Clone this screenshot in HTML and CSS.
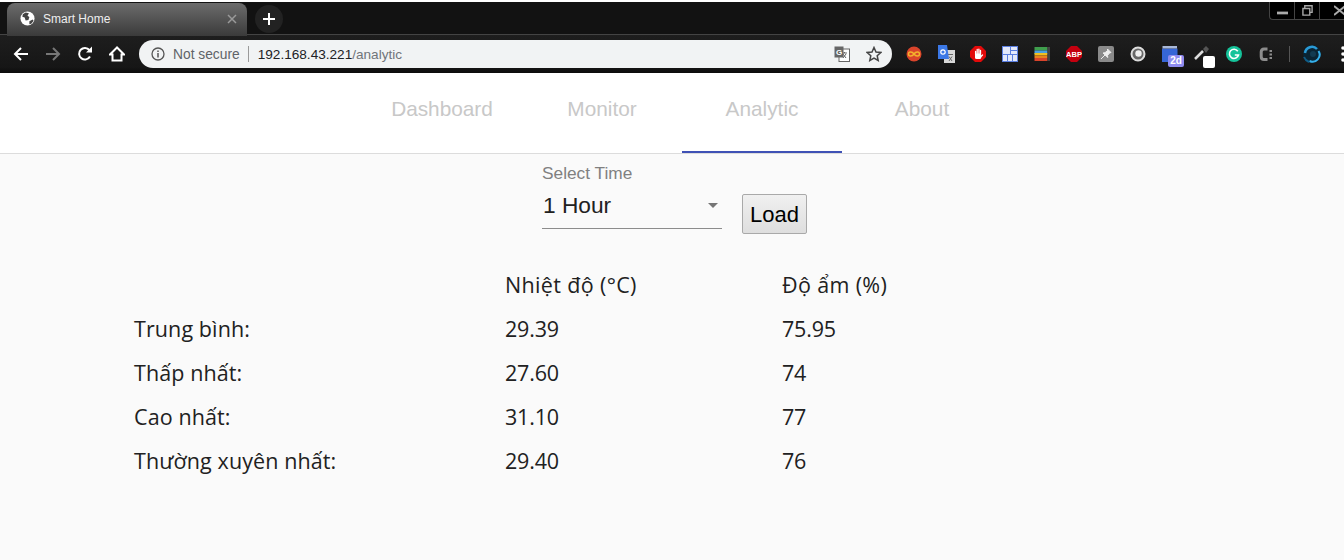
FILE: index.html
```html
<!DOCTYPE html>
<html lang="vi">
<head>
<meta charset="utf-8">
<title>Smart Home</title>
<link rel="stylesheet" href="styles.css">
</head>
<body>
<div class="chrome">
  <div class="topline"></div>
  <div class="tabstrip">
    <div class="tab">
      <svg class="favicon" viewBox="0 0 16 16"><circle cx="8" cy="8" r="7.500" fill="#fff"/><path d="M3 3.500l3-2 3.500 1-1.500 2.500 2 1.500-1 3-3 .5-1-3-2.500-1zM10 11l3.500-2 1 1.500-2.500 3-2 .5z" fill="#444"/></svg>
      <span class="tabtitle">Smart Home</span>
      <svg class="tabclose" viewBox="0 0 10 10"><path d="M1 1l8 8M9 1l-8 8" stroke="#9a9a9a" stroke-width="1.500"/></svg>
    </div>
    <div class="newtab"><svg viewBox="0 0 12 12"><path d="M6 0v12M0 6h12" stroke="#fff" stroke-width="2"/></svg></div>
    <div class="winctl">
      <span class="winbtn"><svg viewBox="0 0 10 10" class="wi"><rect x="0" y="6" width="10" height="2.500" fill="#aaa"/></svg></span>
      <span class="winbtn"><svg viewBox="0 0 12 12" class="wi"><path d="M3 3V0.800h8V8H9M1 3.800h7.500V11H1z" fill="none" stroke="#aaa" stroke-width="1.500"/></svg></span>
      <span class="winbtn last"><svg viewBox="0 0 10 10" class="wi"><path d="M0 1l10 8M10 1L0 9" stroke="#aaa" stroke-width="1.800"/></svg></span>
    </div>
  </div>
  <div class="toolbar">
    <svg class="nav" viewBox="0 0 16 16"><path d="M15 8H2M8 2L2 8l6 6" fill="none" stroke="#fff" stroke-width="2"/></svg>
    <svg class="nav" viewBox="0 0 16 16"><path d="M1 8h13M8 2l6 6-6 6" fill="none" stroke="#777" stroke-width="2"/></svg>
    <svg class="nav" viewBox="0 0 16 16"><path d="M13 10.500A5.800 5.800 0 1 1 12.400 4" fill="none" stroke="#fff" stroke-width="2"/><path d="M9 6.500h6v-6z" fill="#fff"/></svg>
    <svg class="nav" viewBox="0 0 16 16"><path d="M8 1.500L1 8.500h2.500v6h9v-6H15z" fill="none" stroke="#fff" stroke-width="2"/></svg>
    <div class="omnibox">
      <svg class="info" viewBox="0 0 14 14"><circle cx="7" cy="7" r="6" fill="none" stroke="#555" stroke-width="1.300"/><path d="M7 6v4.400M7 3.400v1.600" stroke="#555" stroke-width="1.500"/></svg>
      <span class="notsecure">Not secure</span>
      <span class="omnisep"></span>
      <span class="url">192.168.43.221<span class="urlpath">/analytic</span></span>
      <svg class="translate" viewBox="0 0 16 16"><rect x="5" y="3" width="10.500" height="12.500" fill="#fff" stroke="#666"/><path d="M8 7h5M10.500 6v1M9 12l3-4M9 8l3 4" stroke="#666"/><rect x="0.500" y="0.500" width="9" height="11" fill="#666"/><text x="5" y="9" class="gtext">G</text></svg>
      <svg class="star" viewBox="0 0 16 16"><path d="M8 1.500l2 4.500 4.800.500-3.600 3.200 1 4.800L8 12.100 3.800 14.500l1-4.800L1.200 6.500 6 6z" fill="none" stroke="#444" stroke-width="1.500"/></svg>
    </div>
    <div class="exts">
      <svg class="ext" viewBox="0 0 16 16"><circle cx="8" cy="8" r="7.500" fill="#d9442b"/><path d="M8 8C6 5 2.500 5.500 2.500 8s3.500 3 5.500 0 5.500-2.500 5.500 0S10 11 8 8z" fill="none" stroke="#f3b32c" stroke-width="1.500"/></svg>
      <svg class="ext overflow" viewBox="0 0 16 16"><rect x="6" y="4" width="11" height="13" fill="#d8d8d8"/><path d="M10 8.500h5M11 15l3-4.500M11 10.500l3 4.500" stroke="#666"/><path d="M0 -1h9l2 14H0z" fill="#3b78e7"/><circle cx="5" cy="6" r="2.200" fill="none" stroke="#fff" stroke-width="1.200"/></svg>
      <svg class="ext" viewBox="0 0 16 16"><path d="M5 0h6l5 5v6l-5 5H5l-5-5V5z" fill="#e30a0a"/><path d="M5.600 9V5.500M7.200 8V3.500M8.900 8V3.200M10.500 8V4.500M10.500 11l2-2" fill="none" stroke="#fff" stroke-width="1.300" stroke-linecap="round"/><rect x="5" y="7.500" width="6.200" height="5.500" rx="1.500" fill="#fff"/></svg>
      <svg class="ext" viewBox="0 0 16 16"><rect width="16" height="16" fill="#5b7fe0"/><rect x="1" y="1" width="7" height="7" fill="#e3e9fb"/><rect x="9" y="1" width="6" height="3" fill="#e3e9fb"/><rect x="9" y="5" width="6" height="3" fill="#e3e9fb"/><rect x="1" y="9" width="4" height="6" fill="#e3e9fb"/><rect x="6" y="9" width="4" height="6" fill="#e3e9fb"/><rect x="11" y="9" width="4" height="6" fill="#e3e9fb"/></svg>
      <svg class="ext" viewBox="0 0 16 16"><rect x="0.500" y="1" width="13" height="3.500" fill="#3f9e4d"/><rect x="0.500" y="4.500" width="13" height="3.500" fill="#4a9fe0"/><rect x="0.500" y="7" width="13" height="2.500" fill="#f0c020"/><rect x="0.500" y="9.500" width="13" height="2.500" fill="#e8831e"/><rect x="0.500" y="12" width="13" height="3" fill="#d9442b"/><rect x="13.500" y="1" width="2.500" height="14" fill="#444"/></svg>
      <svg class="ext" viewBox="0 0 16 16"><path d="M5 0h6l5 5v6l-5 5H5l-5-5V5z" fill="#c4000f"/><text x="8" y="10.800" class="abp">ABP</text></svg>
      <svg class="ext" viewBox="0 0 16 16"><rect width="16" height="16" rx="2" fill="#8a8a8a"/><path d="M9.500 3l3.500 3.500-1.500.5-2 2.500.3 2L5 7l2-.3 2.500-2zM7 9L3 13" fill="#eee" stroke="#eee"/></svg>
      <svg class="ext" viewBox="0 0 16 16"><circle cx="8" cy="8" r="6.500" fill="#666" stroke="#ddd" stroke-width="2"/><circle cx="8.500" cy="7.500" r="3.200" fill="#eee"/></svg>
      <div class="ext-badge-wrap">
        <svg class="ext" viewBox="0 0 16 16"><path d="M0 2.500h15.500V16H0z" fill="#3666d6"/><rect x="0.500" width="14.500" height="2.500" fill="#a9b8d8"/></svg>
        <span class="badge2d">2d</span>
      </div>
      <div class="ext-badge-wrap">
        <svg class="ext" viewBox="0 0 16 16"><path d="M1 13l8-8" stroke="#ddd" stroke-width="2.500"/><path d="M9 3l3-3 3 3-3 4z" fill="#555"/></svg>
        <span class="badgewhite"></span>
      </div>
      <svg class="ext" viewBox="0 0 16 16"><circle cx="8" cy="8" r="8" fill="#15c39a"/><path d="M11.800 5.200A4.600 4.600 0 1 0 12.500 9H8.800" fill="none" stroke="#fff" stroke-width="1.600"/></svg>
      <svg class="ext" viewBox="0 0 16 16"><path d="M9.500 3H6Q3.200 3 3.200 6v4.500Q3.200 13.500 6 13.500h3.500" fill="none" stroke="#8c8c8c" stroke-width="3"/><path d="M11.500 4h2.500v2h-2.500zM11.500 7.500h2.500v2h-2.500zM11.500 11h2.500v2h-2.500z" fill="#8c8c8c"/></svg>
      <span class="extsep"></span>
      <svg class="ext orb" viewBox="0 0 20 20"><circle cx="10" cy="10" r="9" fill="#0a2433"/><path d="M3 9a7 7 0 0 1 12-4" fill="none" stroke="#2a9ad6" stroke-width="2.500"/><path d="M16.500 7a7 7 0 0 1-9 10" fill="none" stroke="#36b0ea" stroke-width="2"/><path d="M2 13a9 9 0 0 0 5 5" fill="none" stroke="#0f5c86" stroke-width="2"/><circle cx="11" cy="10" r="3" fill="#123a50"/></svg>
      <svg class="menu" viewBox="0 0 4 16"><circle cx="2" cy="2" r="1.800" fill="#fff"/><circle cx="2" cy="8" r="1.800" fill="#fff"/><circle cx="2" cy="14" r="1.800" fill="#fff"/></svg>
    </div>
  </div>
</div>
<nav class="tabs">
  <a class="navtab">Dashboard</a>
  <a class="navtab">Monitor</a>
  <a class="navtab active">Analytic</a>
  <a class="navtab">About</a>
</nav>
<main class="content">
  <div class="controls">
    <div class="field">
      <label class="fieldlabel">Select Time</label>
      <div class="fieldselect"><span>1 Hour</span><span class="arrow"></span></div>
    </div>
    <button class="load">Load</button>
  </div>
  <div class="stats">
    <div class="cell"></div><div class="cell head">Nhiệt độ (°C)</div><div class="cell head">Độ ẩm (%)</div>
    <div class="cell">Trung bình:</div><div class="cell num">29.39</div><div class="cell num">75.95</div>
    <div class="cell">Thấp nhất:</div><div class="cell num">27.60</div><div class="cell num">74</div>
    <div class="cell">Cao nhất:</div><div class="cell num">31.10</div><div class="cell num">77</div>
    <div class="cell">Thường xuyên nhất:</div><div class="cell num">29.40</div><div class="cell num">76</div>
  </div>
</main>
</body>
</html>
```
FILE: styles.css
```css
* { box-sizing: border-box; }
html, body { margin: 0; padding: 0; height: 100%; overflow: hidden; }
body { background: #fafafa; font-family: "Liberation Sans", Arial, sans-serif; display: flex; flex-direction: column; }

.chrome { background: #111; height: 73px; flex: none; }
.topline { height: 2px; background: #fff; }
.tabstrip { height: 33px; display: flex; align-items: flex-start; position: relative; background: #121212; border-bottom: 1px solid #444; }
.tab { margin: 1px 0 0 7px; width: 240px; height: 33px; border-radius: 8px 8px 0 0; background: linear-gradient(#6c6c6c, #3a3a3a); display: flex; align-items: center; padding: 0 10px 2px 13px; position: relative; z-index: 1; }
.favicon { width: 15px; height: 15px; flex: none; }
.tabtitle { color: #eee; font-size: 12px; margin-left: 8px; flex: 1; }
.tabclose { width: 10px; height: 10px; }
.newtab { width: 28px; height: 28px; border-radius: 50%; background: #222; margin: 3px 0 0 8px; display: flex; align-items: center; justify-content: center; }
.newtab svg { width: 12px; height: 12px; }
.winctl { position: absolute; right: 0; top: 0; height: 18px; width: 75px; display: flex; background: #000; border-left: 1px solid #444; border-bottom: 1px solid #444; border-radius: 0 0 0 4px; }
.winbtn { width: 25px; border-right: 1px solid #444; display: flex; align-items: center; justify-content: center; }
.winbtn.last { border-right: 0; justify-content: flex-end; margin-right: -2px; }
.wi { width: 11px; height: 11px; }

.toolbar { height: 38px; background: linear-gradient(#1e1e1e, #161616 85%, #0b0b0b); display: flex; align-items: flex-start; padding: 5px 0 0 13px; }
.nav { width: 16px; height: 16px; margin: 6px 16px 0 0; flex: none; }
.omnibox { margin-left: -2px; width: 753px; height: 28px; border-radius: 14px; background: #f1f3f4; display: flex; align-items: center; padding: 0 10px 0 12px; flex: none; }
.info { width: 14px; height: 14px; }
.notsecure { color: #5f6368; font-size: 13.800px; margin-left: 8px; }
.omnisep { width: 1px; height: 16px; background: #9a9a9a; margin: 0 9px 0 8px; }
.url { color: #202124; font-size: 13.600px; flex: 1; }
.urlpath { color: #70757a; }
.translate { width: 16px; height: 16px; margin-right: 16px; }
.gtext { font-size: 8px; fill: #fff; text-anchor: middle; font-weight: bold; font-family: "Liberation Sans", sans-serif; }
.star { width: 16px; height: 16px; }

.exts { display: flex; align-items: center; height: 28px; margin-left: 14px; flex: none; position: relative; gap: 16px; }
.ext { width: 16px; height: 16px; display: block; flex: none; }
.overflow { overflow: visible; }
.abp { font-size: 7.500px; fill: #fff; text-anchor: middle; font-weight: bold; font-family: "Liberation Sans", sans-serif; }
.ext-badge-wrap { position: relative; width: 16px; height: 16px; }
.badge2d { position: absolute; left: 6px; top: 9px; width: 16px; height: 12px; background: #8e8cf0; color: #fff; font-size: 10px; font-weight: bold; line-height: 12px; text-align: center; border-radius: 2px; }
.badgewhite { position: absolute; left: 9px; top: 10px; width: 12px; height: 12px; background: #fff; border-radius: 2px; }
.extsep { width: 1px; height: 16px; background: #555; margin-left: -1px; }
.orb { width: 20px; height: 20px; margin-left: -4px; }
.menu { width: 4px; height: 16px; margin-left: 3px; flex: none; }

.tabs { flex: none; height: 81px; background: #fff; border-bottom: 1px solid #dcdcdc; display: flex; justify-content: center; padding-left: 20px; }
.navtab { width: 160px; height: 80px; color: #c8c8c8; font-size: 20.800px; display: flex; align-items: center; justify-content: center; padding-bottom: 7px; border-bottom: 2px solid transparent; }
.navtab.active { border-bottom-color: #3f51b5; }

.content { flex: 1; background: #fafafa; }
.controls { display: flex; align-items: flex-start; padding: 10px 0 0 542px; }
.field { width: 180px; }
.fieldlabel { display: block; color: #808080; font-size: 17.300px; line-height: 18px; }
.fieldselect { height: 46px; border-bottom: 1px solid #8c8c8c; display: flex; align-items: center; justify-content: space-between; font-size: 22.700px; color: #212121; padding: 0 4px 0 1px; margin-top: 1px; }
.arrow { width: 0; height: 0; border-left: 5px solid transparent; border-right: 5px solid transparent; border-top: 5px solid #757575; }
.load { margin: 30px 0 0 20px; width: 65px; height: 40px; font-family: "Liberation Sans", sans-serif; font-size: 22px; color: #000; padding: 2px 0 0; border: 1px solid #a9a9a9; border-radius: 2px; background: linear-gradient(#f0f0f0, #dedede); }

.stats { display: grid; grid-template-columns: 371px 277px 300px; grid-auto-rows: 44px; margin: 29px 0 0 134px; font-family: "Open Sans", sans-serif; font-size: 21.500px; color: #212121; }
.cell { line-height: 44px; white-space: nowrap; letter-spacing: .1px; }
.cell.head { letter-spacing: .35px; }
.cell.num { letter-spacing: -.2px; }
```
